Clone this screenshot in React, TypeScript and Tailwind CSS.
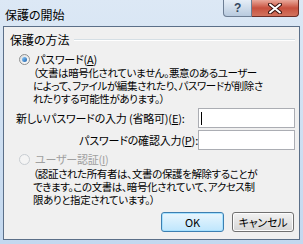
const jp = "font-['Meiryo_UI','Noto_Sans_CJK_JP',sans-serif]";
const para = "pl-[29px] whitespace-nowrap text-[10.5px] tracking-[-0.4px]";

function Radio({ checked, disabled }: { checked?: boolean; disabled?: boolean }) {
    return (
        <span
            className={`w-[11px] h-[11px] rounded-full border flex items-center justify-center ${
                disabled ? "border-[#c8cdd2] bg-[#f4f4f4]" : "border-[#8e8f8f] bg-linear-to-br from-[#dcdcdc] to-[#ffffff]"
            }`}
        >
            {checked && <span className="w-[5px] h-[5px] rounded-full bg-linear-to-br from-[#8fd0ff] to-[#1a5ea8]" />}
        </span>
    );
}

export default function App() {
    return (
        <div className={`w-[303px] h-[244px] flex flex-col bg-linear-to-b from-[#dce8f5] to-[#c3d8ef] text-[11px] leading-[13px] tracking-[-0.2px] text-black ${jp} [font-feature-settings:'palt']`}>
            {/* title bar */}
            <div className="h-[26px] flex items-start pl-[5px] pr-[4px]">
                <span className="mt-[8px] text-[12px] tracking-normal">保護の開始</span>
                <div className="ml-auto flex">
                    <div className="w-[29px] h-[17px] rounded-bl-[4px] border border-t-0 border-[#6d7e94] bg-[#cfdcea] bg-linear-to-b from-[#e6eef7] to-[#b8cade] flex items-center justify-center text-[12px] font-bold text-[#34475e] font-['Liberation_Sans',sans-serif]">
                        ?
                    </div>
                    <div className="w-[47px] h-[17px] rounded-br-[4px] border border-t-0 border-l-0 border-[#6b2c26] bg-[#c75a47] bg-linear-to-b from-[#e9a99c] via-[#c7503e] to-[#d2735e] flex items-center justify-center">
                        <svg width="14" height="11" viewBox="0 0 14 11">
                            <path d="M2 1.5 L12 9.5 M12 1.5 L2 9.5" stroke="#3a1410" strokeWidth="4" strokeLinecap="round" />
                            <path d="M2 1.5 L12 9.5 M12 1.5 L2 9.5" stroke="#ffffff" strokeWidth="2" strokeLinecap="round" />
                        </svg>
                    </div>
                </div>
            </div>

            {/* client area */}
            <div className="mx-[3px] h-[214px] border border-[#5b6f88] bg-[#f0f0f0] flex flex-col">
                <div className="flex items-center mt-[6px] pl-[6px] pr-[4px]">
                    <span className="text-[12px] tracking-normal">保護の方法</span>
                    <div className="flex-1 ml-[4px] border-t border-t-[#d5dfe5] border-b border-b-white" />
                </div>

                <div className="flex items-center mt-[7px] pl-[15px] gap-[5px]">
                    <Radio checked />
                    <span>
                        パスワード(<span className="underline">A</span>)
                    </span>
                </div>
                <div className={para}>
                    <div>（文書は暗号化されていません。悪意のあるユーザー</div>
                    <div>によって、ファイルが編集されたり、パスワードが削除さ</div>
                    <div>れたりする可能性があります。）</div>
                </div>

                <div className="flex mt-[3px] pl-[12px] pr-[4px]">
                    <div className="w-[182px] flex flex-col items-end gap-[2px]">
                        <div className="h-[20px] w-full flex items-center justify-start whitespace-nowrap">
                            新しいパスワードの入力 (省略可)(<span className="underline">E</span>):
                        </div>
                        <div className="h-[20px] flex items-center whitespace-nowrap">
                            パスワードの確認入力(<span className="underline">P</span>):
                        </div>
                    </div>
                    <div className="flex-1 flex flex-col gap-[2px]">
                        <div className="h-[20px] border border-[#abadb3] bg-white flex items-center pl-[2px]">
                            <div className="w-[1px] h-[13px] bg-black" />
                        </div>
                        <div className="h-[20px] border border-[#abadb3] bg-white" />
                    </div>
                </div>

                <div className="flex items-center mt-[3px] pl-[15px] gap-[5px] text-[#a0a0a0]">
                    <Radio disabled />
                    <span>
                        ユーザー認証(<span className="underline">I</span>)
                    </span>
                </div>
                <div className={`${para} mt-[1px]`}>
                    <div>（認証された所有者は、文書の保護を解除することが</div>
                    <div>できます。この文書は、暗号化されていて、アクセス制</div>
                    <div>限ありと指定されています。）</div>
                </div>

                <div className="flex justify-end gap-[8px] mt-[6px] pr-[5px]">
                    <button className="w-[63px] h-[20px] rounded-[3px] border border-[#3c7fb1] bg-linear-to-b from-[#eaf6fd] to-[#bee6fd] shadow-[inset_0_0_0_1px_#a6e1ff] flex items-center justify-center">
                        OK
                    </button>
                    <button className="w-[62px] h-[20px] rounded-[3px] border border-[#707070] bg-linear-to-b from-[#f2f2f2] to-[#d5d5d5] shadow-[inset_0_0_0_1px_#fcfcfc] flex items-center justify-center">
                        キャンセル
                    </button>
                </div>
            </div>
        </div>
    );
}
